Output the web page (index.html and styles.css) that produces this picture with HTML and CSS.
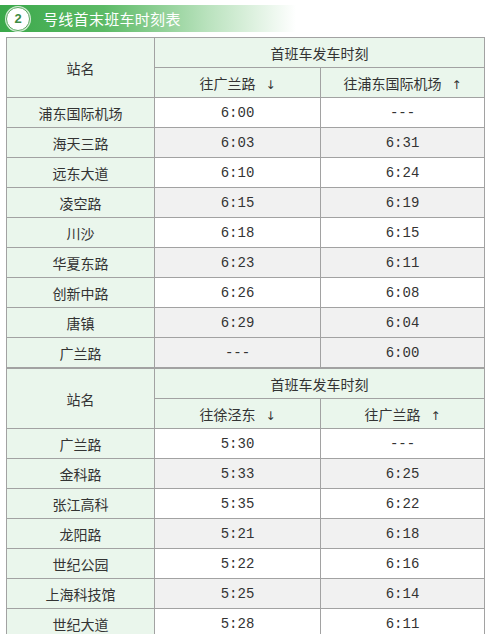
FILE: index.html
```html
<!DOCTYPE html>
<html lang="zh">
<head>
<meta charset="utf-8">
<link rel="stylesheet" href="styles.css">
</head>
<body>
<div class="page">
  <div class="title-bar">
    <span class="badge">2</span>
    <span class="title">号线首末班车时刻表</span>
  </div>
  <table class="tt">
    <colgroup><col class="c1"><col class="c2"><col class="c3"></colgroup>
    <tr class="h"><th rowspan="2">站名</th><th colspan="2">首班车发车时刻</th></tr>
    <tr class="h"><th>往广兰路<span class="arr">↓</span></th><th>往浦东国际机场<span class="arr">↑</span></th></tr>
    <tr><th>浦东国际机场</th><td>6:00</td><td>---</td></tr>
    <tr class="g"><th>海天三路</th><td>6:03</td><td>6:31</td></tr>
    <tr><th>远东大道</th><td>6:10</td><td>6:24</td></tr>
    <tr class="g"><th>凌空路</th><td>6:15</td><td>6:19</td></tr>
    <tr><th>川沙</th><td>6:18</td><td>6:15</td></tr>
    <tr class="g"><th>华夏东路</th><td>6:23</td><td>6:11</td></tr>
    <tr><th>创新中路</th><td>6:26</td><td>6:08</td></tr>
    <tr class="g"><th>唐镇</th><td>6:29</td><td>6:04</td></tr>
    <tr class="g"><th>广兰路</th><td>---</td><td>6:00</td></tr>
  </table>
  <table class="tt">
    <colgroup><col class="c1"><col class="c2"><col class="c3"></colgroup>
    <tr class="h"><th rowspan="2">站名</th><th colspan="2">首班车发车时刻</th></tr>
    <tr class="h"><th>往徐泾东<span class="arr">↓</span></th><th>往广兰路<span class="arr">↑</span></th></tr>
    <tr><th>广兰路</th><td>5:30</td><td>---</td></tr>
    <tr class="g"><th>金科路</th><td>5:33</td><td>6:25</td></tr>
    <tr><th>张江高科</th><td>5:35</td><td>6:22</td></tr>
    <tr class="g"><th>龙阳路</th><td>5:21</td><td>6:18</td></tr>
    <tr><th>世纪公园</th><td>5:22</td><td>6:16</td></tr>
    <tr class="g"><th>上海科技馆</th><td>5:25</td><td>6:14</td></tr>
    <tr><th>世纪大道</th><td>5:28</td><td>6:11</td></tr>
  </table>
</div>
</body>
</html>
```
FILE: styles.css
```css
html, body {
  margin: 0;
  padding: 0;
  background: #ffffff;
}
.page {
  padding: 5px 1px 0 6px;
  font-family: "Noto Sans CJK SC", "Noto Sans", sans-serif;
  color: #333333;
}
.title-bar {
  display: flex;
  align-items: center;
  height: 27px;
  width: 290px;
  margin-left: -6px;
  padding-left: 6px;
  background: linear-gradient(to right, #3aa84a 0%, #5cba66 35%, #b9e2bd 70%, #ffffff 100%);
  margin-bottom: 5px;
}
.badge {
  display: flex;
  align-items: center;
  justify-content: center;
  width: 24px;
  height: 24px;
  border-radius: 50%;
  background: #ffffff;
  border: 1px solid #5aa860;
  color: #3d8a43;
  font-family: "Liberation Sans", sans-serif;
  font-weight: bold;
  font-size: 13px;
  box-sizing: border-box;
  box-shadow: 0 0 0 1px #d7eed9;
}
.title {
  margin-left: 13px;
  color: #ffffff;
  font-size: 15px;
  letter-spacing: 0.3px;
}
.tt {
  width: 478px;
  border-collapse: collapse;
  border: 1px solid #9c9c9c;
  table-layout: fixed;
  font-size: 14px;
}
.c1 { width: 148px; }
.c2 { width: 166px; }
.c3 { width: 164px; }
.tt th, .tt td {
  border: 1px solid #a2a2a2;
  height: 30px;
  padding: 0;
  text-align: center;
  font-weight: normal;
  box-sizing: border-box;
}
.tt th {
  background: #eaf6ec;
}
.tt td {
  background: #ffffff;
  font-family: "Liberation Mono", "DejaVu Sans Mono", monospace;
  font-size: 14px;
}
.tt tr.g td {
  background: #f1f1f1;
}
.arr {
  margin-left: 10px;
  font-family: "DejaVu Sans", sans-serif;
  font-size: 12px;
}
```
